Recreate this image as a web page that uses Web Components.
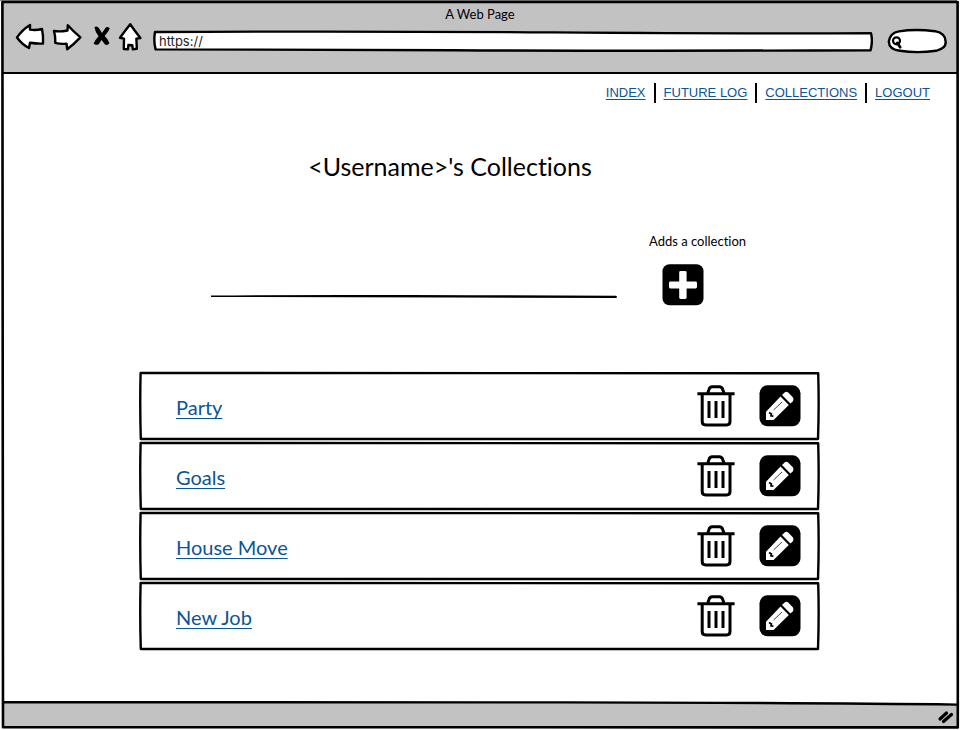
<!DOCTYPE html>
<html lang="en">
<head>
<meta charset="utf-8">
<title>A Web Page</title>
<style>
  body { margin: 0; background: #fff; color: #000; font-family: Lato, sans-serif; font-variant-ligatures: none; --link: #0b5596; --chrome: #c2c2c2; }
</style>
</head>
<body>
<sketch-browser page-title="A Web Page" address="https://">
  <site-nav>
    <nav-link href="#index">INDEX</nav-link>
    <nav-link href="#future">FUTURE LOG</nav-link>
    <nav-link href="#collections">COLLECTIONS</nav-link>
    <nav-link href="#logout">LOGOUT</nav-link>
  </site-nav>
  <page-heading>&lt;Username&gt;'s Collections</page-heading>
  <add-collection>Adds a collection</add-collection>
  <collection-list>
    <collection-row href="#party">Party</collection-row>
    <collection-row href="#goals">Goals</collection-row>
    <collection-row href="#house-move">House Move</collection-row>
    <collection-row href="#new-job">New Job</collection-row>
  </collection-list>
</sketch-browser>

<script>
const define = (name, html, setup) => {
  const template = document.createElement('template');
  template.innerHTML = html;
  customElements.define(name, class extends HTMLElement {
    connectedCallback() {
      if (this.shadowRoot) return;
      const root = this.attachShadow({ mode: 'open' });
      root.append(template.content.cloneNode(true));
      if (setup) setup(this, root);
    }
  });
};

const buttonReset = `button { display: block; margin: 0; padding: 0; border: 0; background: none; color: inherit; cursor: pointer; }
  button svg { display: block; }`;

define('browser-toolbar', `
<style>
  :host { display: flex; align-items: flex-start; gap: 7px; padding: 0 10px 0 12px; }
  ${buttonReset}
  .field { display: grid; margin-top: 7px; height: 22px; }
  .field > * { grid-area: 1 / 1; }
  .field svg { width: 100%; height: 100%; }
  .url { flex: 1; margin-left: 4px; }
  .search { width: 60px; height: 26px; margin: 5px 0 0 7px; }
  input { box-sizing: border-box; width: 100%; min-width: 0; border: 0; outline: 0; background: none; padding: 0 6px; font: 13px/20px Inter, sans-serif; color: #222; position: relative; }
  .search input { padding-left: 20px; }
  .shape { fill: #fff; stroke: #000; stroke-width: 2.4; stroke-linejoin: round; stroke-linecap: round; }
</style>
<button type="button" aria-label="Back"><svg width="30" height="28" viewBox="15 23 30 28"><path class="shape" d="M17 37.5 Q22 30 30 25 L30 29.6 Q36 30.6 42 29 Q43.5 36 43 43.6 Q36 43.8 30 42.8 L29 48 Q22 44.5 17 37.5Z"/></svg></button>
<button type="button" aria-label="Forward"><svg width="30" height="28" viewBox="52 23 30 28"><path class="shape" d="M54 31 Q60 32 67.5 30.5 L67.8 25.2 Q73 31 80.4 37.3 Q74 44 67.2 49.2 L66.5 43.6 Q61 44.4 55.2 42.8 Q55.6 37 54 31Z"/></svg></button>
<button type="button" aria-label="Stop"><svg width="22" height="28" viewBox="89 23 22 28"><path fill="#000" d="M94.4 27.2 Q97 25.4 98.8 28 L102 33 L106 27.2 Q109 26.3 109.8 28.6 Q108 32.5 104.6 36 Q108 39 109.4 43 Q108 45.8 105 44.6 L101.6 40 L98.4 44.4 Q95.4 45.6 93.6 43.4 Q95.6 39.4 98.6 36.2 Q95.2 32 94.4 27.2Z"/></svg></button>
<button type="button" aria-label="Home"><svg width="24" height="28" viewBox="118 23 24 28"><path class="shape" d="M130.2 24.3 Q134.8 31 140.4 38 L136.4 38.6 L136.8 48.8 L132.8 49.4 L132.3 45.2 L128.4 45 L127.9 49.4 L123.8 49 L124 38.6 L120 37.8 Q124.6 31.4 130.2 24.3Z"/></svg></button>
<div class="field url"><svg viewBox="0 0 719 22" preserveAspectRatio="none" aria-hidden="true"><path class="shape" d="M2 2 Q200 1 400 2.4 T717 3.2 Q719 11 716.6 20.2 Q500 21.2 300 20.2 T2.6 19.4 Q0.4 11 2 2Z"/></svg><input type="text" aria-label="Address"></div>
<div class="field search"><svg viewBox="0 0 60 26" preserveAspectRatio="none" aria-hidden="true"><path class="shape" d="M12 3.4 Q28 .6 48 3.2 Q59 5.5 58.6 14 Q59.4 20 49 22.8 Q30 25.4 13 22.8 Q2 21.5 1.8 13.5 Q3 5 12 3.4Z"/><circle cx="9.5" cy="12.8" r="3.5" fill="none" stroke="#000" stroke-width="2.2"/><path d="M10.4 15 L13.2 19.2" stroke="#000" stroke-width="2.8" stroke-linecap="round"/></svg><input type="text" aria-label="Search"></div>
`, (host, root) => { root.querySelector('.url input').value = host.getAttribute('address'); });

define('sketch-browser', `
<style>
  :host { display: flex; flex-direction: column; min-height: 100vh; box-sizing: border-box; padding: 2px 3px 3px; position: relative; }
  header { box-sizing: border-box; min-height: 72px; background: var(--chrome); padding-top: 3px; border-bottom: 2px solid #000; }
  .title { text-align: center; font-size: 13px; line-height: 18px; }
  main { flex: 1; display: flex; flex-direction: column; }
  footer { display: grid; height: 27px; }
  footer svg { grid-area: 1 / 1; height: 27px; }
  footer .bar { width: 100%; }
  footer .grip { justify-self: end; }
  .frame { position: absolute; inset: 0; width: 100%; height: 100%; pointer-events: none; }
</style>
<header><div class="title"></div></header>
<main><slot></slot></main>
<footer>
  <svg class="bar" viewBox="0 0 954 27" preserveAspectRatio="none" aria-hidden="true"><path d="M0 2.2 Q300 2 560 2.4 T954 4.6 V27 H0Z" fill="#c2c2c2"/><path d="M0 2.2 Q300 2 560 2.4 T954 4.6" fill="none" stroke="#000" stroke-width="2.4"/></svg>
  <svg class="grip" width="24" viewBox="0 0 24 27" aria-hidden="true"><path d="M7 19 L13.5 13 M10.5 21.5 L18.5 14.5" stroke="#000" stroke-width="3.2" stroke-linecap="round"/></svg>
</footer>
<svg class="frame" viewBox="0 0 960 730" preserveAspectRatio="none" aria-hidden="true"><path d="M0 .5 H957" stroke="#858985" stroke-width="1"/><path d="M2.4 2 Q400 1.6 957.6 2 Q958.8 300 957.8 727.4 Q500 728.4 3 727.2 Q1.4 400 2.4 2Z" fill="none" stroke="#000" stroke-width="2.6" stroke-linejoin="round"/></svg>
`, (host, root) => {
  root.querySelector('.title').textContent = host.getAttribute('page-title');
  const bar = document.createElement('browser-toolbar');
  bar.setAttribute('address', host.getAttribute('address'));
  root.querySelector('header').append(bar);
});

define('nav-link', `
<style>
  :host { display: flex; align-items: center; height: 20px; }
  :host(:not(:first-child)) { border-left: 2px solid #000; padding-left: 8px; }
  a { font: 13px/20px "Liberation Sans", sans-serif; color: var(--link); text-underline-offset: 2px; }
</style>
<a><slot></slot></a>`, (host, root) => { root.querySelector('a').href = host.getAttribute('href'); });

define('site-nav', `
<style>
  :host { display: block; padding: 9px 27px 0; }
  nav { display: flex; justify-content: flex-end; flex-wrap: wrap; gap: 8px; }
</style>
<nav><slot></slot></nav>`);

define('page-heading', `
<style>
  :host { display: block; padding: 48px 60px 0 0; }
  h1 { margin: 0; text-align: center; font-size: 25px; line-height: 30px; font-weight: 400; }
</style>
<h1><slot></slot></h1>`);

define('add-collection', `
<style>
  :host { display: block; padding: 52px 24px 0; }
  form { display: grid; grid-template-columns: 1fr 100px; column-gap: 32px; row-gap: 15px; max-width: 538px; margin: 0 auto; }
  label { grid-column: 2; font-size: 13px; line-height: 16px; white-space: nowrap; }
  .entry { display: grid; align-self: start; min-width: 0; }
  input { border: 0; outline: 0; background: none; padding: 0 4px; height: 31px; min-width: 0; font: 20px Lato, sans-serif; }
  .entry svg { width: 100%; height: 3px; }
  ${buttonReset}
  button { margin-left: 13px; justify-self: start; }
</style>
<form>
  <label for="add"><slot></slot></label>
  <div class="entry"><input type="text" aria-label="Collection name"><svg viewBox="0 0 406 3" preserveAspectRatio="none" aria-hidden="true"><path d="M0 .6 Q140 -.4 260 .2 L405 .7 Q407 2 405 2.9 L240 2.6 L0 2Z"/></svg></div>
  <button type="button" id="add"><svg width="42" height="42" viewBox="0 0 42 42" aria-hidden="true"><rect x=".5" y=".3" width="41" height="41" rx="7"/><g fill="#fff"><rect x="17.2" y="7" width="7.4" height="28" rx="1.4"/><rect x="7" y="17.4" width="28" height="7" rx="1.4"/></g></svg></button>
</form>`);

define('collection-list', `
<style>
  :host { display: block; padding: 66px 26px 48px 24px; }
  div { display: grid; gap: 2px; max-width: 680px; margin: 0 auto; }
</style>
<div role="list"><slot></slot></div>`);

define('collection-row', `
<style>
  :host { display: grid; }
  .edge, .row { grid-area: 1 / 1; }
  .edge { width: 100%; height: 100%; min-height: 0; overflow: visible; }
  .row { display: flex; align-items: center; gap: 24px; box-sizing: border-box; min-height: 68px; padding: 0 18px 0 37px; position: relative; }
  .name { flex: 1; padding-top: 2px; }
  a { font-size: 20px; line-height: 28px; color: var(--link); text-underline-offset: 3px; text-decoration-thickness: 1px; }
  ${buttonReset}
</style>
<svg class="edge" viewBox="0 0 680 68" preserveAspectRatio="none" aria-hidden="true"><path d="M1.6 1 Q340 .6 679.2 1.2 Q680.2 34 679 67 Q340 68 1.8 67 Q.8 34 1.6 1Z" fill="none" stroke="#000" stroke-width="2.4" stroke-linejoin="round"/></svg>
<div class="row">
  <div class="name"><a><slot></slot></a></div>
  <button type="button" aria-label="Delete"><svg width="38" height="42" viewBox="0 0 38 42" fill="none" stroke="#000" stroke-width="3" aria-hidden="true"><path d="M.4 8.8 H37.6"/><path d="M10.8 8 L12 4.4 Q12.8 1.7 15.2 1.7 H22.4 Q24.8 1.7 25.7 4.4 L27 8"/><path d="M5.2 9 V36.6 Q5.2 40 8.6 40 H29.6 Q33 40 33 36.6 V9"/><path d="M12 16 V33 M19 16 V33 M26 16 V33"/></svg></button>
  <button type="button" aria-label="Edit"><svg width="42" height="42" viewBox="0 0 42 42" aria-hidden="true"><rect x=".5" y=".3" width="41" height="41" rx="8"/><path fill="#fff" d="M7 26.8 L21.5 11.6 L29.8 20 L14.6 35 H7Z M23 10 L25.6 7.5 Q27.4 6.2 29.2 7.6 L33.8 12.2 Q35.4 14.4 34 16.2 L31.4 18.6Z"/><path d="M14.6 25 L23 17" stroke="#444" stroke-width="1"/><path d="M10 27.6 L12.4 29 L12 30.8 L14.4 31.2" fill="none" stroke="#000" stroke-width="1.7"/></svg></button>
</div>`, (host, root) => {
  host.setAttribute('role', 'listitem');
  root.querySelector('a').href = host.getAttribute('href');
});
</script>
</body>
</html>
